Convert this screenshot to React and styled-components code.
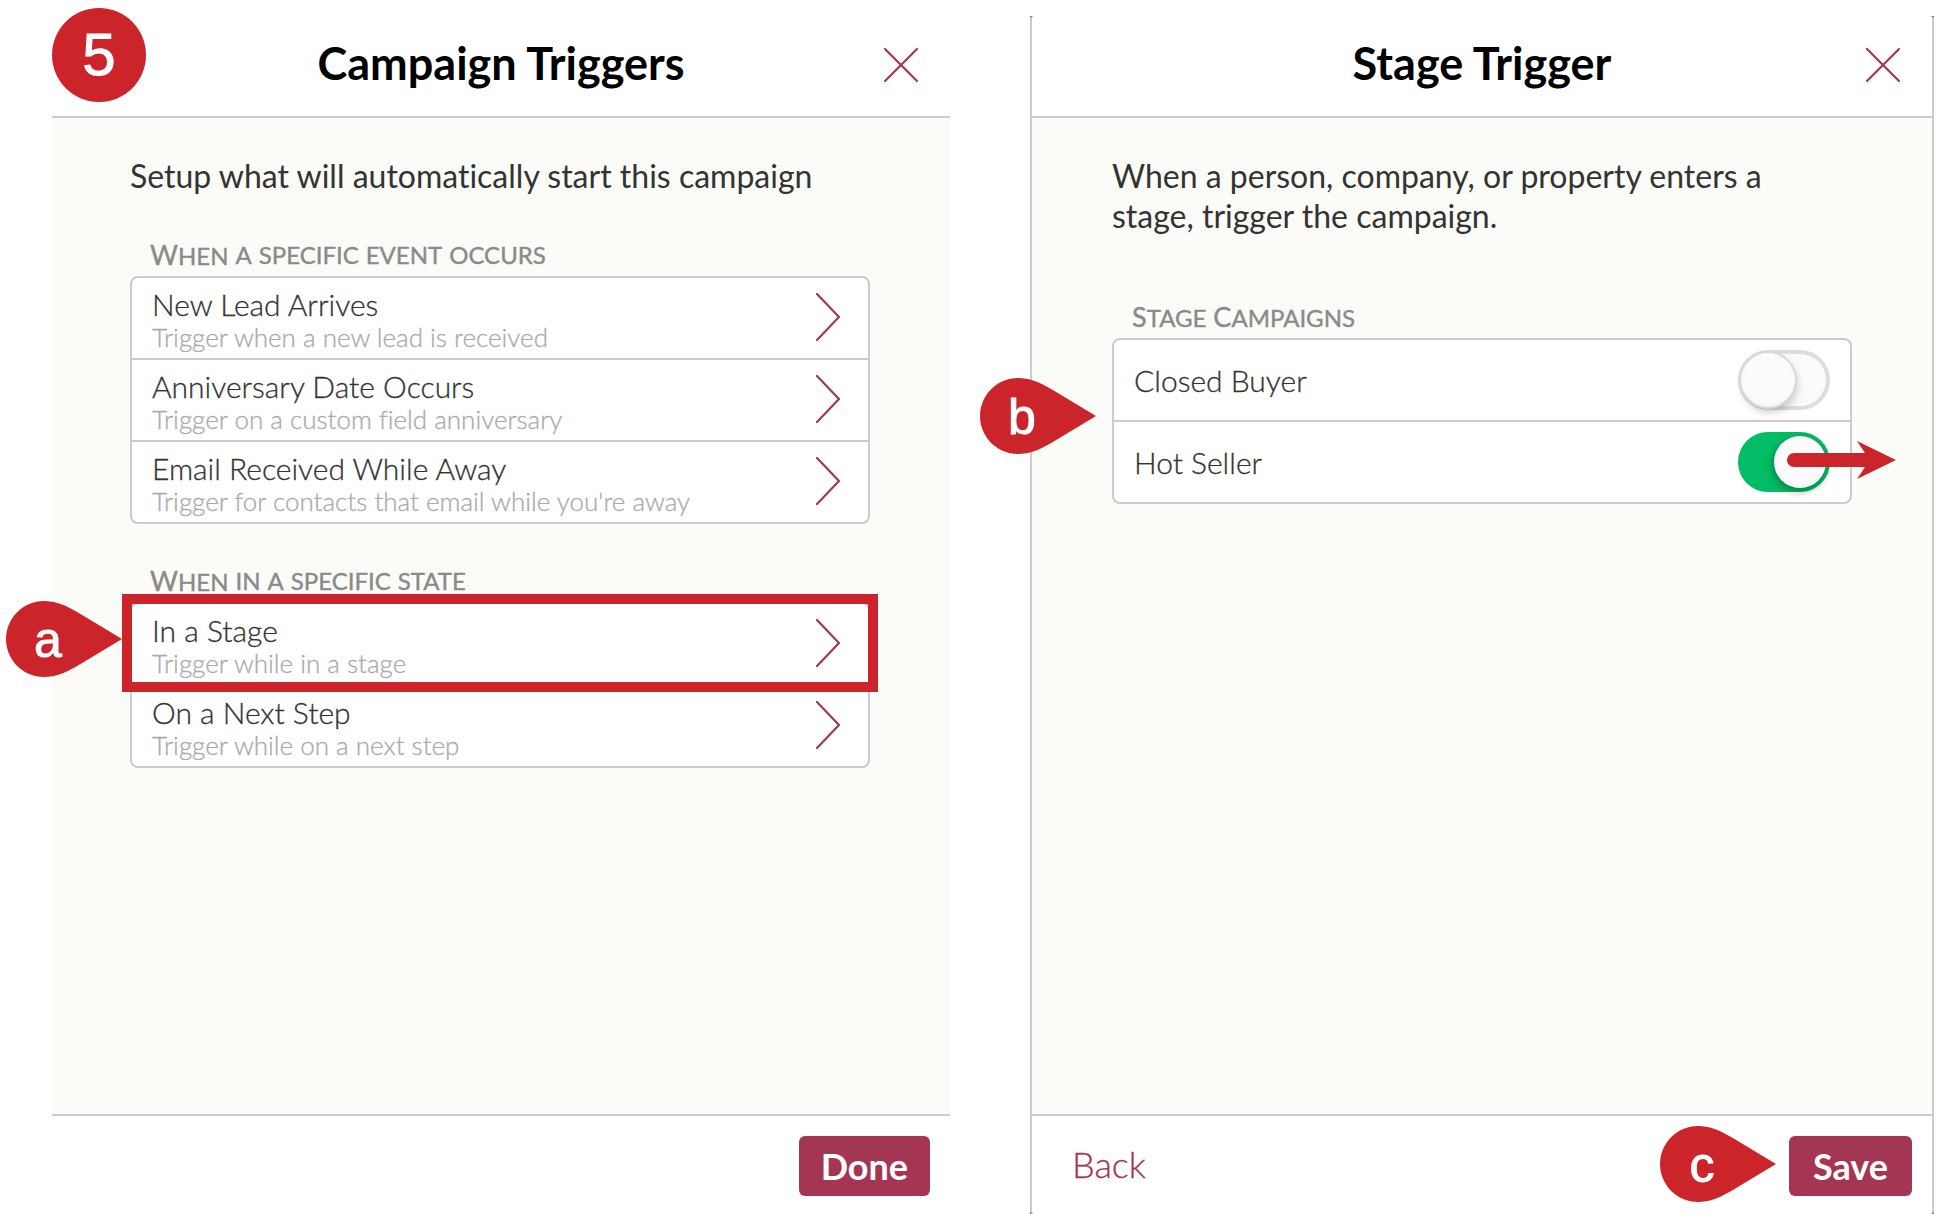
import React, { useState } from "react";
import styled, { createGlobalStyle, css } from "styled-components";

const color = {
  brand: "#a43653",
  marker: "#cc242b",
  line: "#cccccc",
  cream: "#fbfcf7",
  text: "#333333",
  muted: "#aaaaaa",
  heading: "#8a8a8a",
  on: "#02bd66",
};

const GlobalStyle = createGlobalStyle`
  *, *::before, *::after { box-sizing: border-box; }
  body {
    margin: 0;
    background: #fff;
    color: ${color.text};
    font-family: Lato, "Open Sans", sans-serif;
    font-variant-ligatures: none;
  }
  button, input { font: inherit; }
`;

const Page = styled.main`
  display: grid;
  grid-template-columns: 898fr 904fr;
  gap: 80px;
  min-height: 100vh;
  padding: 16px 4px 0 52px;
`;

const Frame = styled.div`
  position: relative;
  display: flex;
  ${(p) => p.$outlined && css`background: #777;`}
`;

const Panel = styled.section`
  flex: 1;
  display: flex;
  flex-direction: column;
  background: #fff;
  ${(p) =>
    p.$outlined &&
    css`
      border: solid ${color.line};
      border-width: 0 2px;
      border-radius: 4px;
    `}
`;

const Header = styled.header`
  position: relative;
  display: flex;
  align-items: center;
  justify-content: center;
  height: 102px;
  border-bottom: 2px solid ${color.line};
`;

const Title = styled.h1`
  margin: 0;
  padding-bottom: 6px;
  color: #000;
  font-size: 45px;
  line-height: 52px;
  font-weight: 700;
`;

const CloseButton = styled.button`
  position: absolute;
  right: 30px;
  top: 30px;
  width: 38px;
  height: 38px;
  padding: 1px;
  border: 0;
  background: none;
  color: ${color.brand};
  svg { display: block; }
`;

const Body = styled.div`
  flex: 1;
  padding: 38px 80px 40px ${(p) => (p.$outlined ? 80 : 78)}px;
  background: ${color.cream};
`;

const Intro = styled.p`
  max-width: 700px;
  margin: 0;
  padding-bottom: ${(p) => (p.$spacious ? 24 : 2)}px;
  font-size: 32px;
  line-height: 40px;
`;

const GroupTitle = styled.h2`
  display: flex;
  gap: 7px;
  margin: 40px 0 4px 20px;
  color: ${color.heading};
  font-size: 24px;
  line-height: 34px;
  font-weight: 400;
  text-transform: uppercase;
  -webkit-text-stroke: 0.4px;
`;

const Word = styled.span`
  display: block;
  height: 34px;
  ${(p) => p.$capital && css`&::first-letter { font-size: 27px; }`}
`;

const List = styled.ul`
  position: relative;
  margin: 0;
  padding: 0;
  list-style: none;
  background: #fff;
  border: 2px solid ${color.line};
  border-radius: 8px;
`;

const Item = styled.li`
  position: relative;
  & + & { border-top: 2px solid ${color.line}; }
`;

const RowButton = styled.button`
  display: flex;
  align-items: center;
  justify-content: space-between;
  width: 100%;
  height: 80px;
  padding: 0 28px 2px 20px;
  border: 0;
  background: none;
  color: inherit;
  text-align: left;
`;

const RowText = styled.span`
  display: flex;
  flex-direction: column;
  padding-top: 6px;
`;

const RowTitle = styled.span`
  font-size: 30px;
  line-height: 34px;
  font-weight: 300;
  -webkit-text-stroke: 0.3px;
`;

const RowNote = styled.span`
  color: ${color.muted};
  font-size: 26px;
  line-height: 32px;
  font-weight: 300;
  -webkit-text-stroke: 0.3px;
`;

const ToggleRow = styled.div`
  display: flex;
  align-items: center;
  justify-content: space-between;
  height: 80px;
  padding: 0 20px;
`;

const ToggleLabel = styled.label`
  font-size: 30px;
  line-height: 34px;
  font-weight: 300;
  -webkit-text-stroke: 0.3px;
`;

const Switch = styled.input`
  appearance: none;
  position: relative;
  width: 92px;
  height: 60px;
  margin: 0;
  border: 4px solid #dddddd;
  border-radius: 30px;
  background: #fcfafc;
  &::after {
    content: "";
    position: absolute;
    top: -1px;
    left: -1px;
    width: 54px;
    height: 54px;
    border-radius: 50%;
    background: radial-gradient(circle at 50% 45%, #fcfafc 55%, #f1f1f1 100%);
    box-shadow: 0 0 0 2px #d8d8d8, 2px 5px 8px rgba(0, 0, 0, 0.22);
  }
  &:checked {
    border-color: ${color.on};
    background: ${color.on};
  }
  &:checked::after {
    left: 32px;
    top: 0;
    width: 52px;
    height: 52px;
    box-shadow: -1px 3px 8px rgba(0, 0, 0, 0.35);
  }
`;

const Footer = styled.footer`
  display: flex;
  align-items: center;
  justify-content: space-between;
  height: 100px;
  padding: 2px 20px 0 40px;
  border-top: 2px solid ${color.line};
`;

const BackButton = styled.button`
  padding: 0 0 4px;
  border: 0;
  background: none;
  color: ${color.brand};
  font-size: 36px;
  line-height: 40px;
  font-weight: 300;
  -webkit-text-stroke: 0.3px;
`;

const PrimaryAction = styled.div`
  position: relative;
  margin-left: auto;
`;

const PrimaryButton = styled.button`
  display: block;
  min-width: 123px;
  height: 60px;
  padding: 0 22px;
  border: 0;
  border-radius: 6px;
  background: ${color.brand};
  color: #fff;
  font-size: 36px;
  line-height: 60px;
  font-weight: 700;
`;

const StepNumber = styled.div`
  position: absolute;
  z-index: 2;
  top: -8px;
  left: 0;
  display: grid;
  place-items: center;
  width: 94px;
  height: 94px;
  border-radius: 50%;
  background: ${color.marker};
  color: #fff;
  font: 60px/94px "Liberation Sans", Arial, sans-serif;
  -webkit-text-stroke: 1px;
`;

const Highlight = styled.span`
  position: absolute;
  z-index: 1;
  inset: -10px -10px -8px;
  border: 10px solid ${color.marker};
  pointer-events: none;
`;

const PinBox = styled.span`
  position: absolute;
  z-index: 2;
  left: ${(p) => p.$left}px;
  top: ${(p) => p.$top}px;
  display: block;
  width: 116px;
  height: 76px;
  svg { position: absolute; inset: 0; }
`;

const PinLetter = styled.span`
  position: relative;
  display: block;
  width: 84px;
  color: #fff;
  text-align: center;
  font: 50px/78px "Liberation Sans", Arial, sans-serif;
  -webkit-text-stroke: 1px;
`;

const ArrowMark = styled.svg`
  position: absolute;
  z-index: 2;
  right: -46px;
  top: 18px;
`;

function Pin({ letter, left, top }) {
  return (
    <PinBox $left={left} $top={top}>
      <svg width="116" height="76" viewBox="0 0 116 76" aria-hidden="true">
        <path
          d="M116 38 L72 11.500 C58 3.500 49 0 38 0 C17 0 0 17 0 38 C0 59 17 76 38 76 C49 76 58 72.500 72 64.500 Z"
          fill={color.marker}
        />
      </svg>
      <PinLetter>{letter}</PinLetter>
    </PinBox>
  );
}

function Chevron() {
  return (
    <svg width="24" height="48" viewBox="0 0 24 48" fill="none" aria-hidden="true">
      <path d="M1 1 L23 24 L1 47" stroke={color.brand} strokeWidth="2.200" strokeLinecap="round" />
    </svg>
  );
}

function Close() {
  return (
    <CloseButton type="button" aria-label="Close">
      <svg width="36" height="36" viewBox="0 0 36 36" fill="none" aria-hidden="true">
        <path d="M2 2 L34 34 M34 2 L2 34" stroke={color.brand} strokeWidth="2.200" strokeLinecap="round" />
      </svg>
    </CloseButton>
  );
}

function SmallCaps({ children }) {
  return (
    <GroupTitle>
      {children.split(" ").map((word, i) => (
        <Word key={i} $capital={/^[A-Z]/.test(word)}>
          {word}
        </Word>
      ))}
    </GroupTitle>
  );
}

function TriggerList({ items }) {
  return (
    <List>
      {items.map((item) => (
        <Item key={item.title}>
          <RowButton type="button">
            <RowText>
              <RowTitle>{item.title}</RowTitle>
              <RowNote>{item.note}</RowNote>
            </RowText>
            <Chevron />
          </RowButton>
          {item.pin && (
            <>
              <Highlight />
              <Pin letter={item.pin} left={-126} top={-3} />
            </>
          )}
        </Item>
      ))}
    </List>
  );
}

function StageToggle({ id, label, initial, arrow }) {
  const [on, setOn] = useState(initial);
  return (
    <Item>
      <ToggleRow>
        <ToggleLabel htmlFor={id}>{label}</ToggleLabel>
        <Switch id={id} type="checkbox" role="switch" checked={on} onChange={() => setOn(!on)} />
      </ToggleRow>
      {arrow && (
        <ArrowMark width="110" height="40" viewBox="0 0 110 40" aria-hidden="true">
          <path d="M8 13 H79 L71 1 L110 20 L71 39 L79 27 H8 A7 7 0 0 1 8 13 Z" fill={color.marker} />
        </ArrowMark>
      )}
    </Item>
  );
}

const eventTriggers = [
  { title: "New Lead Arrives", note: "Trigger when a new lead is received" },
  { title: "Anniversary Date Occurs", note: "Trigger on a custom field anniversary" },
  { title: "Email Received While Away", note: "Trigger for contacts that email while you're away" },
];

const stateTriggers = [
  { title: "In a Stage", note: "Trigger while in a stage", pin: "a" },
  { title: "On a Next Step", note: "Trigger while on a next step" },
];

export default function App() {
  return (
    <>
      <GlobalStyle />
      <Page>
        <Frame>
          <StepNumber>5</StepNumber>
          <Panel>
            <Header>
              <Title>Campaign Triggers</Title>
              <Close />
            </Header>
            <Body>
              <Intro>Setup what will automatically start this campaign</Intro>
              <SmallCaps>When a specific event occurs</SmallCaps>
              <TriggerList items={eventTriggers} />
              <SmallCaps>When in a specific state</SmallCaps>
              <TriggerList items={stateTriggers} />
            </Body>
            <Footer>
              <PrimaryAction>
                <PrimaryButton type="button">Done</PrimaryButton>
              </PrimaryAction>
            </Footer>
          </Panel>
        </Frame>
        <Frame $outlined>
          <Panel $outlined>
            <Header>
              <Title>Stage Trigger</Title>
              <Close />
            </Header>
            <Body $outlined>
              <Intro $spacious>When a person, company, or property enters a stage, trigger the campaign.</Intro>
              <SmallCaps>Stage Campaigns</SmallCaps>
              <List>
                <StageToggle id="closed-buyer" label="Closed Buyer" initial={false} />
                <StageToggle id="hot-seller" label="Hot Seller" initial arrow />
                <Pin letter="b" left={-134} top={38} />
              </List>
            </Body>
            <Footer>
              <BackButton type="button">Back</BackButton>
              <PrimaryAction>
                <Pin letter="c" left={-129} top={-10} />
                <PrimaryButton type="button">Save</PrimaryButton>
              </PrimaryAction>
            </Footer>
          </Panel>
        </Frame>
      </Page>
    </>
  );
}
